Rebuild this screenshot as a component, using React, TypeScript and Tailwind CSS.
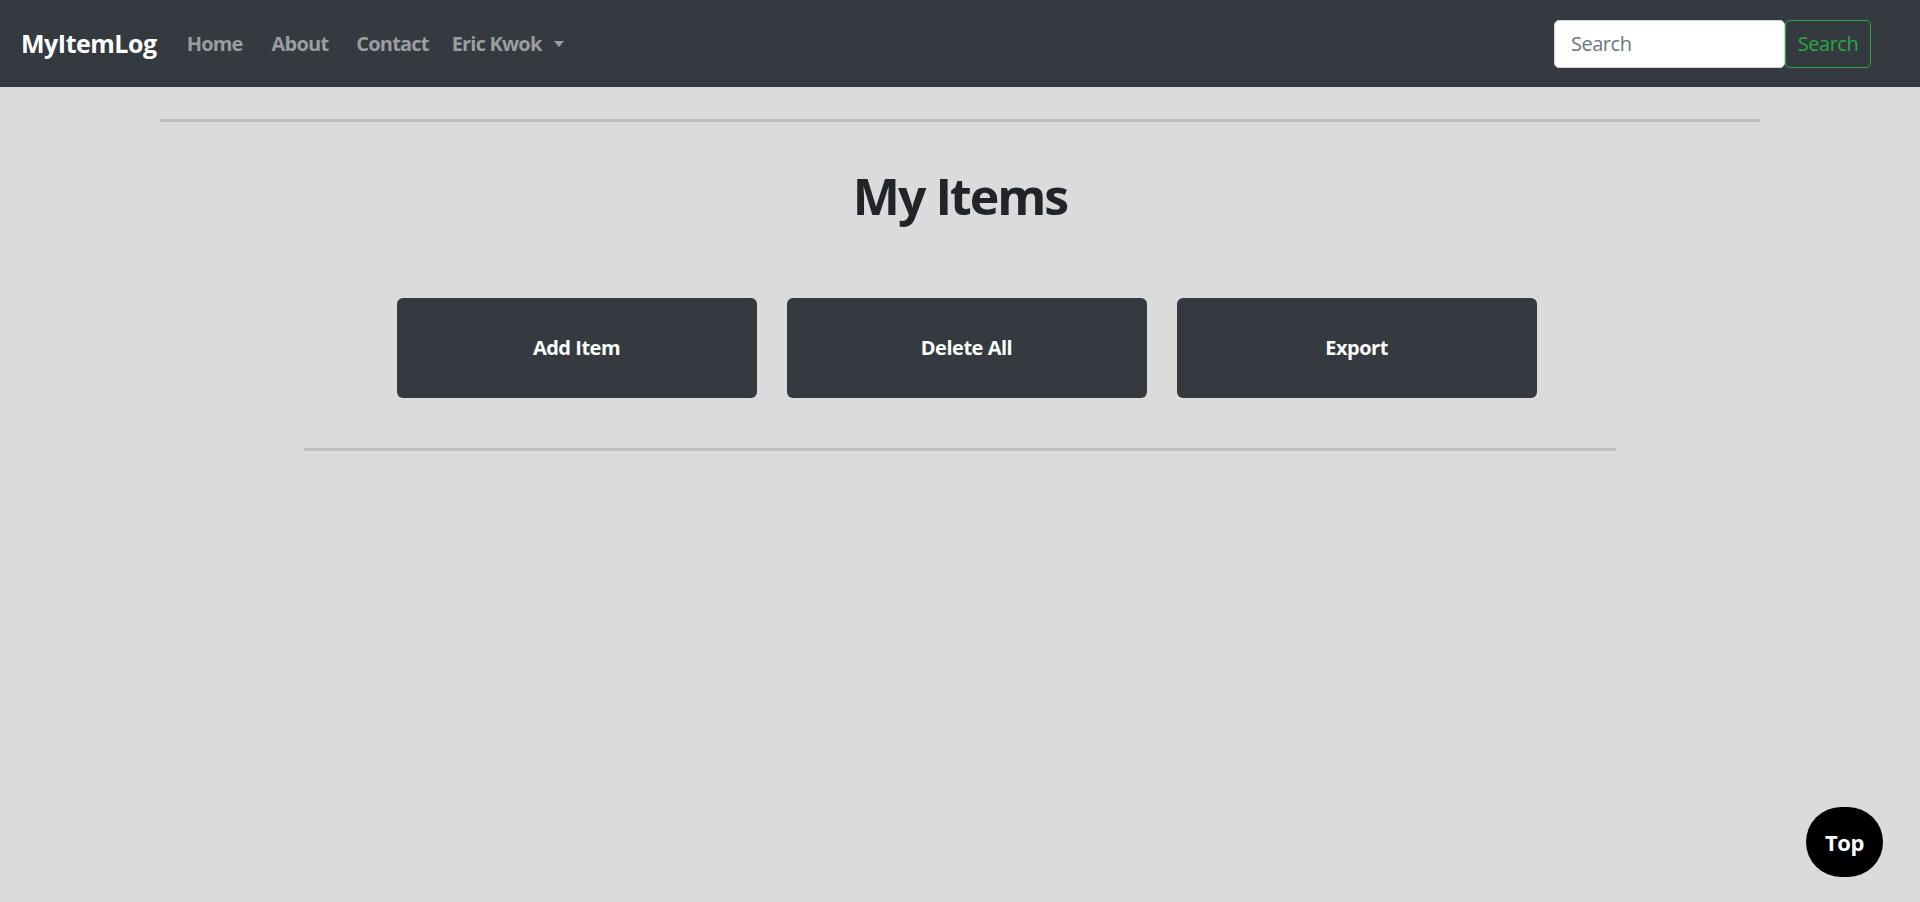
import { useEffect } from "react";

const navLinks = [
  { label: "Home", cls: "ml-[30px]" },
  { label: "About", cls: "ml-[29px]" },
  { label: "Contact", cls: "ml-[28px]" },
];
const actions = ["Add Item", "Delete All", "Export"];

const Navbar = () => (
  <nav className="h-[87px] bg-[#343a40] flex items-center justify-between pl-[21px] pr-[49px]">
    <div className="flex items-center">
      <a className="text-[25px] font-bold text-white leading-none">MyItemLog</a>
      {navLinks.map((l) => (
        <a key={l.label} className={`${l.cls} text-[20px] font-bold text-[#9a9da1] leading-none tracking-[-0.04em]`}>
          {l.label}
        </a>
      ))}
      <a className="ml-[23px] text-[20px] font-bold text-[#9a9da1] leading-none tracking-[-0.04em] flex items-center">
        Eric Kwok
        <span className="ml-[12px] w-0 h-0 border-l-[5px] border-r-[5px] border-t-[6px] border-l-transparent border-r-transparent border-t-[#9a9da1]" />
      </a>
    </div>
    <form className="flex items-center">
      <input
        className="w-[231px] h-[48px] bg-white rounded-[5px] border border-[#ced4da] px-[16px] text-[20px] text-[#495057] placeholder:text-[#6c757d] outline-none"
        placeholder="Search"
      />
      <button
        type="button"
        className="w-[86px] h-[48px] rounded-[5px] border border-[#28a745] text-[#28a745] text-[20px]"
      >
        Search
      </button>
    </form>
  </nav>
);

export default function App() {
  useEffect(() => {
    document.body.style.background = "#dbdbdb";
  }, []);

  return (
    <div className="min-h-[902px] bg-[#dbdbdb] font-['Segoe_UI','Open_Sans',sans-serif] tracking-[-0.03em] text-[#212529]">
      <Navbar />
      <main className="flex flex-col items-center">
        <hr className="w-[1600px] mt-[32px] border-0 border-t-[3px] border-[#bdbdbd]" />
        <h1 className="mt-[44px] text-[50px] font-bold leading-[60px] tracking-[-0.04em]">My Items</h1>
        <div className="mt-[72px] flex gap-[30px] pl-[13px]">
          {actions.map((a) => (
            <button
              key={a}
              type="button"
              className="w-[360px] h-[100px] bg-[#343a40] rounded-[6px] text-white text-[20px] font-bold"
            >
              {a}
            </button>
          ))}
        </div>
        <hr className="w-[1312px] mt-[50px] border-0 border-t-[3px] border-[#bdbdbd]" />
      </main>
      <button
        type="button"
        className="fixed right-[37px] bottom-[25px] w-[77px] h-[70px] rounded-full bg-black text-white text-[22px] font-bold"
      >
        Top
      </button>
    </div>
  );
}
